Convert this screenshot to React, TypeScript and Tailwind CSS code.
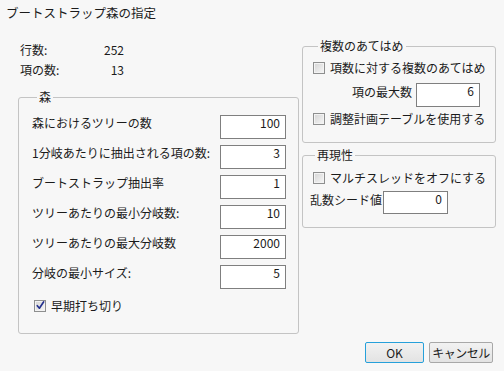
import React from 'react';

type RowProps = { label: string; value: string };

const NumBox: React.FC<{ value: string; className?: string }> = ({ value, className = '' }) => (
  <div className={`border border-[#7f7f7f] bg-white pr-[5px] text-right leading-[14px] ${className}`}>{value}</div>
);

const CheckBox: React.FC<{ checked?: boolean }> = ({ checked }) => (
  <div className="relative mt-[2px] h-[12px] w-[12px] shrink-0 border border-[#8e8f8f] bg-gradient-to-br from-[#d4d4d4] to-[#f7f7f7] shadow-[inset_0_0_0_1px_#f3f3f3]">
    {checked && (
      <svg viewBox="0 0 12 12" className="absolute left-[0px] top-[-1px] h-[11px] w-[11px]">
        <path d="M2.5 6.2 L4.8 9 L9.5 2" fill="none" stroke="#23308e" strokeWidth="1.8" strokeLinecap="round" strokeLinejoin="round" />
      </svg>
    )}
  </div>
);

const CheckRow: React.FC<{ label: string; checked?: boolean; className?: string }> = ({ label, checked, className = '' }) => (
  <div className={`flex items-start gap-[5px] leading-[16px] ${className}`}>
    <CheckBox checked={checked} />
    <span>{label}</span>
  </div>
);

const ForestRow: React.FC<RowProps> = ({ label, value }) => (
  <div className="flex h-[24px] items-start justify-between">
    <span className="leading-[16px]">{label}</span>
    <NumBox value={value} className="h-[24px] w-[66px]" />
  </div>
);

const rows: RowProps[] = [
  { label: '森におけるツリーの数', value: '100' },
  { label: '1分岐あたりに抽出される項の数:', value: '3' },
  { label: 'ブートストラップ抽出率', value: '1' },
  { label: 'ツリーあたりの最小分岐数:', value: '10' },
  { label: 'ツリーあたりの最大分岐数', value: '2000' },
  { label: '分岐の最小サイズ:', value: '5' },
];

const Legend: React.FC<{ text: string }> = ({ text }) => (
  <legend className="ml-[5px] px-[2px] leading-[16px]">{text}</legend>
);

export default function App() {
  return (
    <div
      className="flex h-[371px] w-[504px] flex-col bg-[#f7f7f7] text-[12px] text-[#1b1b1b]"
      style={{ fontFamily: '"Noto Sans CJK JP", "Noto Sans", sans-serif' }}
    >
      <div className="pl-[6px] pt-[5px] text-[12.5px] leading-[16px]">ブートストラップ森の指定</div>

      <div className="mt-[17px] flex gap-[3px] pl-[18px]">
        {/* left column */}
        <div className="w-[281px]">
          <div className="grid grid-cols-[80px_24px] gap-y-[4px] pl-[2px] pt-[4px] leading-[16px]">
            <span>行数:</span>
            <span className="text-right">252</span>
            <span>項の数:</span>
            <span className="text-right">13</span>
          </div>

          <fieldset className="mt-[11px] rounded-[3px] border border-[#c4c4c4] pb-[19px] pl-[13px] pr-[12px]">
            <Legend text="森" />
            <div className="flex flex-col gap-[6px] pt-[10px]">
              {rows.map((r) => (
                <ForestRow key={r.label} {...r} />
              ))}
            </div>
            <CheckRow label="早期打ち切り" checked className="ml-[2px] mt-[9px]" />
          </fieldset>
        </div>

        {/* right column */}
        <div className="w-[194px]">
          <fieldset className="rounded-[3px] border border-[#c4c4c4] pb-[15px] pl-[10px]">
            <Legend text="複数のあてはめ" />
            <CheckRow label="項数に対する複数のあてはめ" className="pt-[6px]" />
            <div className="mt-[7px] flex items-start gap-[4px] pl-[39px]">
              <span className="pt-[1px] leading-[16px]">項の最大数</span>
              <NumBox value="6" className="h-[24px] w-[64px]" />
            </div>
            <CheckRow label="調整計画テーブルを使用する" className="mt-[4px]" />
          </fieldset>

          <fieldset className="mt-[4px] rounded-[3px] border border-[#c4c4c4] pb-[13px] pl-[7px]">
            <Legend text="再現性" />
            <CheckRow label="マルチスレッドをオフにする" className="pl-[3px] pt-[7px]" />
            <div className="mt-[5px] flex items-start gap-[1px]">
              <span className="pt-[1px] leading-[16px]">乱数シード値</span>
              <NumBox value="0" className="h-[23px] w-[65px]" />
            </div>
          </fieldset>
        </div>
      </div>

      <div className="mt-auto flex justify-end gap-[5px] pb-[8px] pr-[11px]">
        <button className="h-[21px] w-[59px] rounded-[2px] border border-[#26a0da] bg-gradient-to-b from-[#f2f2f2] to-[#e3e3e3] leading-[16px]">
          OK
        </button>
        <button className="h-[21px] w-[64px] rounded-[2px] border border-[#a8a8a8] bg-gradient-to-b from-[#f2f2f2] to-[#e3e3e3] px-0 leading-[16px] tracking-[-0.5px]">
          キャンセル
        </button>
      </div>
    </div>
  );
}
